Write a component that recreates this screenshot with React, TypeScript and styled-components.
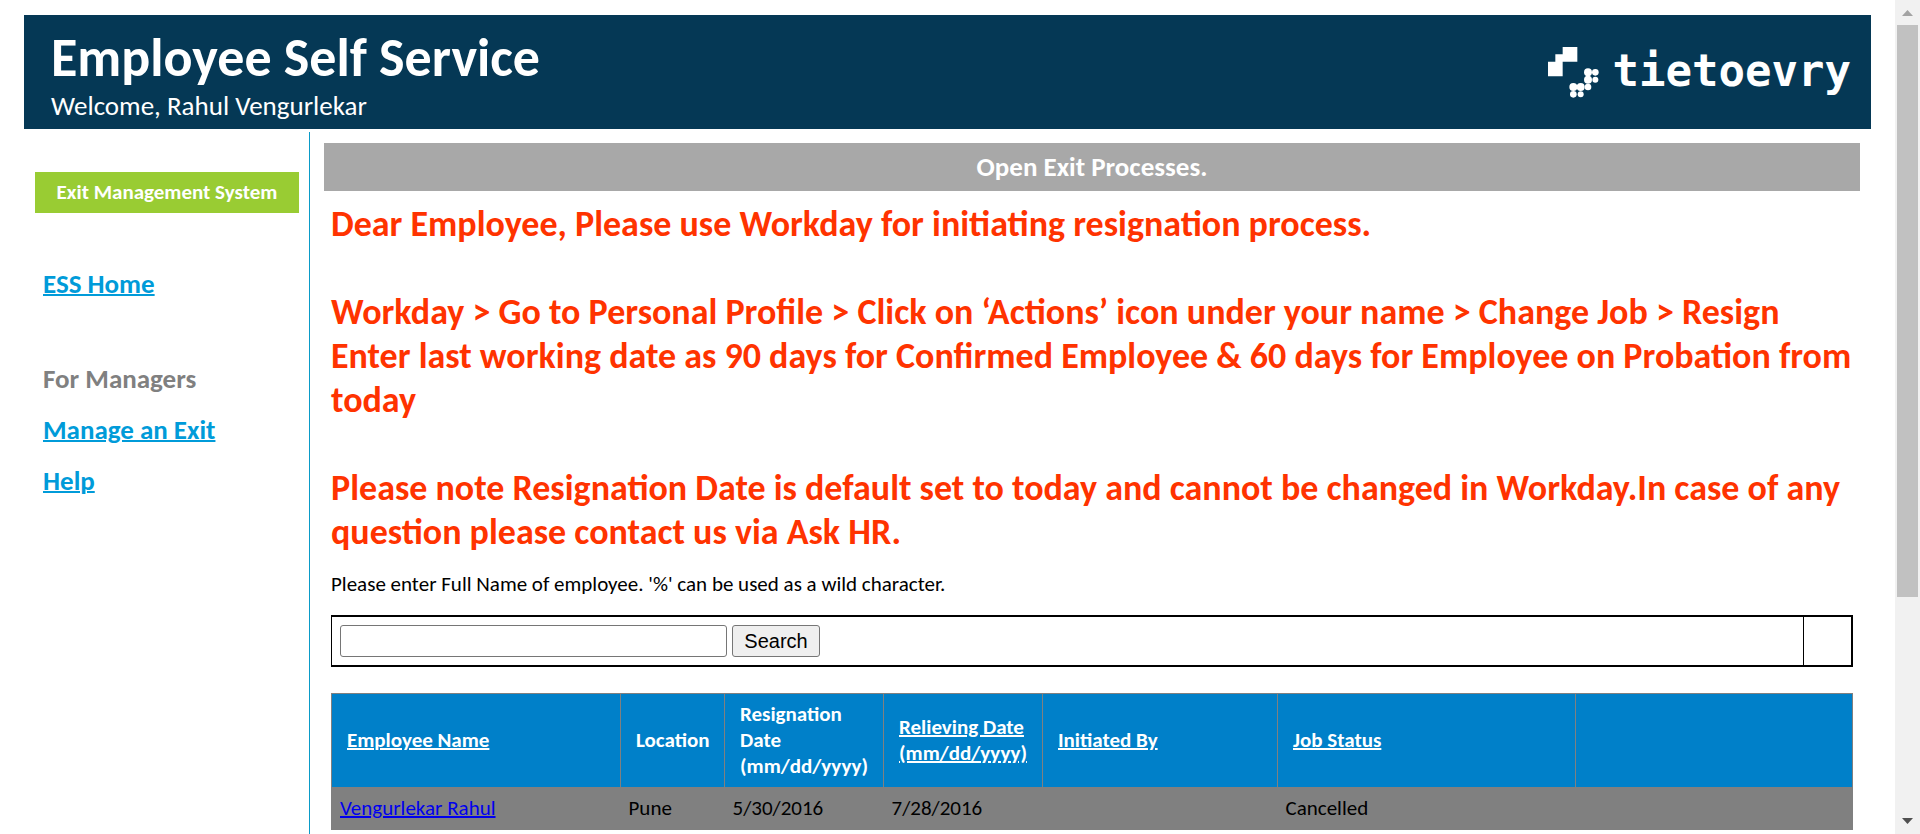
import React from "react";
import styled, { createGlobalStyle } from "styled-components";

const GlobalStyle = createGlobalStyle`
  * { box-sizing: border-box; }
  body {
    margin: 0;
    background: #fff;
    color: #000;
    font-family: Calibri, Carlito, Lato, sans-serif;
    font-size: 21px;
    line-height: 26px;
  }
`;

const Window = styled.div`
  display: flex;
  height: 100vh;
  overflow: hidden;
`;

const Page = styled.div`
  flex: 1;
  min-width: 0;
  display: flex;
  flex-direction: column;
  padding: 15px 24px 0;
`;

const Header = styled.header`
  display: flex;
  justify-content: space-between;
  align-items: flex-start;
  padding: 12px 20px 6px 27px;
  background: #053855;
  color: #fff;
`;

const Title = styled.h1`
  margin: 0;
  font-size: 54px;
  line-height: 62px;
  font-weight: 700;
`;

const Welcome = styled.p`
  margin: 0;
  font-size: 27px;
  line-height: 34px;
`;

const Brand = styled.div`
  display: flex;
  align-items: flex-start;
  gap: 14px;
  padding-top: 20px;
`;

const BrandName = styled.span`
  font-family: "DejaVu Sans Mono", monospace;
  font-weight: 700;
  font-size: 44px;
  line-height: 48px;
`;

const Columns = styled.div`
  flex: 1;
  display: flex;
  padding-top: 3px;
`;

const Sidebar = styled.nav`
  flex: none;
  width: 286px;
  padding: 40px 10px 0 11px;
  border-right: 1px solid #0a9bc8;
`;

const SystemName = styled.div`
  padding: 7px 0 8px;
  background: #9c3;
  color: #fff;
  font-weight: 700;
  text-align: center;
`;

const NavList = styled.div`
  display: flex;
  flex-direction: column;
  align-items: flex-start;
  gap: 19px;
  margin-top: 55px;
  padding-left: 8px;
  font-size: 27px;
  line-height: 32px;
  font-weight: 700;
`;

const NavLink = styled.a`
  color: #009bd9;
  text-decoration: underline;
  text-decoration-thickness: 2px;
`;

const NavHeading = styled.span`
  margin-top: 44px;
  color: #808080;
`;

const Main = styled.main`
  flex: 1;
  min-width: 0;
  padding: 11px 11px 0 14px;
`;

const Banner = styled.h2`
  margin: 0;
  padding: 8px 0;
  background: #a8a8a8;
  color: #fff;
  font-size: 27px;
  line-height: 32px;
  text-align: center;
`;

const Body = styled.div`
  padding: 11px 7px 0;
`;

const Notice = styled.p`
  margin: 0 0 44px;
  color: #f30;
  font-size: 36px;
  line-height: 44px;
  font-weight: 700;

  &:last-of-type { margin-bottom: 17px; }
`;

const Hint = styled.label`
  display: block;
  margin-bottom: 18px;
`;

const SearchBar = styled.form`
  display: flex;
  margin-bottom: 26px;
  border: 2px solid #000;
  border-left-width: 1px;
`;

const SearchFields = styled.div`
  flex: 1;
  display: flex;
  gap: 5px;
  padding: 8px;
`;

const SearchAside = styled.div`
  width: 48px;
  border-left: 1px solid #000;
`;

const SearchInput = styled.input`
  width: 387px;
  height: 32px;
  border: 1px solid #767676;
  border-radius: 3px;
  font-size: 18px;
`;

const SearchButton = styled.button`
  width: 88px;
  height: 32px;
  padding: 0;
  border: 1px solid #767676;
  border-radius: 3px;
  background: #efefef;
  color: #000;
  font-family: "Liberation Sans", Arial, sans-serif;
  font-size: 20px;
`;

const Table = styled.table`
  width: 100%;
  table-layout: fixed;
  border-collapse: collapse;
  border: 1px solid #808080;
`;

const Col = styled.col<{ $width?: number }>`
  width: ${(p) => (p.$width ? `${p.$width}px` : "auto")};
`;

const HeadCell = styled.th`
  height: 94px;
  padding: 6px 0 8px 15px;
  border: 1px solid #808080;
  background: #0080c9;
  color: #fff;
  text-align: left;
`;

const SortLink = styled.a`
  color: #fff;
  text-decoration: underline;
  text-decoration-thickness: 2px;
`;

const Cell = styled.td`
  height: 42px;
  padding: 7px 8px 8px;
  background: #808080;
`;

const RecordLink = styled.a`
  color: #00e;
  text-decoration-thickness: 2px;
`;

const Scrollbar = styled.div`
  flex: none;
  width: 25px;
  display: flex;
  flex-direction: column;
  background: #f1f1f1;
`;

const ScrollArrow = styled.svg`
  flex: none;
  width: 25px;
  height: 25px;
`;

const ScrollTrack = styled.div`
  flex: 1;
  padding: 0 2px;
`;

const ScrollThumb = styled.div`
  height: 73%;
  background: #c1c1c1;
`;

const dots = [
  [120, 76, 12], [142, 76, 10], [120, 98, 12], [142, 98, 9],
  [76, 120, 12], [98, 120, 12], [120, 120, 10], [76, 142, 10], [98, 142, 9],
];

const BrandMark = () => (
  <svg width="51" height="51" viewBox="0 0 153 153" fill="#fff" aria-hidden="true">
    <path d="M44 0H88V44H44V88H0V44H22V22H44Z" />
    {dots.map(([x, y, r]) => (
      <circle key={`${x}-${y}`} cx={x} cy={y} r={r} />
    ))}
  </svg>
);

type Column = { label: React.ReactNode; width?: number; sortable?: boolean };

const columns: Column[] = [
  { label: "Employee Name", width: 289, sortable: true },
  { label: "Location", width: 104 },
  { label: <>Resignation<br />Date<br />(mm/dd/yyyy)</>, width: 159 },
  { label: <>Relieving Date<br />(mm/dd/yyyy)</>, width: 159, sortable: true },
  { label: "Initiated By", width: 235, sortable: true },
  { label: "Job Status", width: 298, sortable: true },
  { label: "" },
];

export default function App() {
  return (
    <Window>
      <GlobalStyle />
      <Page>
        <Header>
          <div>
            <Title>Employee Self Service</Title>
            <Welcome>Welcome, Rahul Vengurlekar</Welcome>
          </div>
          <Brand>
            <BrandMark />
            <BrandName>tietoevry</BrandName>
          </Brand>
        </Header>
        <Columns>
          <Sidebar>
            <SystemName>Exit Management System</SystemName>
            <NavList>
              <NavLink href="#home">ESS Home</NavLink>
              <NavHeading>For Managers</NavHeading>
              <NavLink href="#manage">Manage an Exit</NavLink>
              <NavLink href="#help">Help</NavLink>
            </NavList>
          </Sidebar>
          <Main>
            <Banner>Open Exit Processes.</Banner>
            <Body>
              <Notice>
                Dear Employee, Please use Workday for initiating resignation process.
              </Notice>
              <Notice>
                Workday &gt; Go to Personal Profile &gt; Click on ‘Actions’ icon under your
                name &gt; Change Job &gt; Resign
                <br />
                Enter last working date as 90 days for Confirmed Employee &amp; 60 days for
                Employee on Probation from today
              </Notice>
              <Notice>
                Please note Resignation Date is default set to today and cannot be changed in
                Workday.In case of any question please contact us via Ask HR.
              </Notice>
              <Hint htmlFor="employee">
                Please enter Full Name of employee. '%' can be used as a wild character.
              </Hint>
              <SearchBar onSubmit={(e) => e.preventDefault()}>
                <SearchFields>
                  <SearchInput id="employee" type="text" />
                  <SearchButton type="submit">Search</SearchButton>
                </SearchFields>
                <SearchAside />
              </SearchBar>
              <Table>
                <colgroup>
                  {columns.map((c, i) => (
                    <Col key={i} $width={c.width} />
                  ))}
                </colgroup>
                <thead>
                  <tr>
                    {columns.map((c, i) => (
                      <HeadCell key={i} scope="col">
                        {c.sortable ? <SortLink href="#sort">{c.label}</SortLink> : c.label}
                      </HeadCell>
                    ))}
                  </tr>
                </thead>
                <tbody>
                  <tr>
                    <Cell><RecordLink href="#record">Vengurlekar Rahul</RecordLink></Cell>
                    <Cell>Pune</Cell>
                    <Cell>5/30/2016</Cell>
                    <Cell>7/28/2016</Cell>
                    <Cell />
                    <Cell>Cancelled</Cell>
                    <Cell />
                  </tr>
                </tbody>
              </Table>
            </Body>
          </Main>
        </Columns>
      </Page>
      <Scrollbar aria-hidden="true">
        <ScrollArrow viewBox="0 0 25 25" fill="#a3a3a3"><path d="M7 16L12.5 10L18 16Z" /></ScrollArrow>
        <ScrollTrack><ScrollThumb /></ScrollTrack>
        <ScrollArrow viewBox="0 0 25 25" fill="#505050"><path d="M7 9L12.5 15L18 9Z" /></ScrollArrow>
      </Scrollbar>
    </Window>
  );
}
